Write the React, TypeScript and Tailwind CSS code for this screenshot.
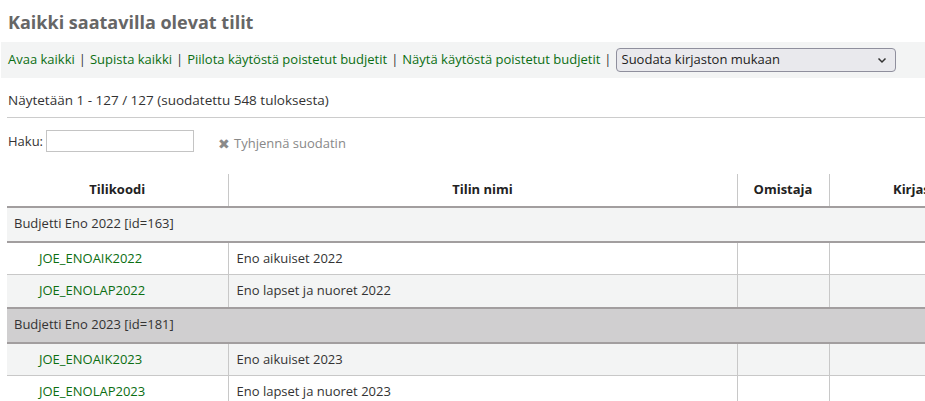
const GREEN = 'text-[#0b6e12]';

type Row = { code: string; name: string };
type Group = { title: string; rows: Row[]; dark?: boolean };

const groups: Group[] = [
  {
    title: 'Budjetti Eno 2022 [id=163]',
    rows: [
      { code: 'JOE_ENOAIK2022', name: 'Eno aikuiset 2022' },
      { code: 'JOE_ENOLAP2022', name: 'Eno lapset ja nuoret 2022' },
    ],
  },
  {
    title: 'Budjetti Eno 2023 [id=181]',
    dark: true,
    rows: [
      { code: 'JOE_ENOAIK2023', name: 'Eno aikuiset 2023' },
      { code: 'JOE_ENOLAP2023', name: 'Eno lapset ja nuoret 2023' },
    ],
  },
];

export default function App() {
  let stripe = 0;
  return (
    <div className="h-[401px] w-[925px] overflow-hidden bg-white text-[13px] text-[#333] [font-family:'Open_Sans',sans-serif]">
      <h1 className="px-2 pt-[9px] text-[18px] font-bold leading-[26px] text-[#666]">Kaikki saatavilla olevat tilit</h1>

      {/* Toolbar */}
      <div className="mt-[7px] ml-px flex h-9 items-center bg-[#f3f4f4] px-[7px] whitespace-nowrap">
        <a className={GREEN}>Avaa kaikki</a>
        <span className="mx-[4px]">|</span>
        <a className={GREEN}>Supista kaikki</a>
        <span className="mx-[4px]">|</span>
        <a className={GREEN}>Piilota käytöstä poistetut budjetit</a>
        <span className="mx-[4px]">|</span>
        <a className={GREEN}>Näytä käytöstä poistetut budjetit</a>
        <span className="mx-[4px]">|</span>
        <div className="flex h-6 w-[280px] items-center justify-between rounded-[4px] border border-[#8f8f9d] bg-[#e9e9ed] px-[5px] text-[#222]">
          <span>Suodata kirjaston mukaan</span>
          <svg width="10" height="10" viewBox="0 0 10 10" className="mr-[3px]">
            <path d="M1.5 3.5 L5 7 L8.5 3.5" fill="none" stroke="#333" strokeWidth="1.5" />
          </svg>
        </div>
      </div>

      <div className="px-2">
        <p className="pt-[13px] text-[13.5px] leading-[18px]">Näytetään 1 - 127 / 127 (suodatettu 548 tuloksesta)</p>
        <div className="mt-[8px] -mr-2 ml-[-1px] border-t border-[#cccccc]" />

        {/* Search */}
        <div className="mt-[11px] flex items-center">
          <label className="mr-[3px]">Haku:</label>
          <input className="h-[22px] w-[148px] border border-[#c4c4c4] bg-white" />
          <span className="mt-[5px] ml-[24px] flex items-center text-[#888]">
            <span className="mr-[4px] text-[14px] leading-none text-[#8a8a8a]">✖</span>
            Tyhjennä suodatin
          </span>
        </div>
      </div>

      {/* Table */}
      <table className="mt-[20px] ml-[7px] w-[1000px] table-fixed border-collapse">
        <colgroup>
          <col className="w-[221px]" />
          <col className="w-[509px]" />
          <col className="w-[92px]" />
          <col className="w-[178px]" />
        </colgroup>
        <thead>
          <tr className="h-[33px]">
            <th className="border-r border-b-2 border-r-[#c8c8c8] border-b-[#a29e9f] font-bold text-[#222]">Tilikoodi</th>
            <th className="border-r border-b-2 border-r-[#c8c8c8] border-b-[#a29e9f] font-bold text-[#222]">Tilin nimi</th>
            <th className="border-r border-b-2 border-r-[#c8c8c8] border-b-[#a29e9f] font-bold text-[#222]">Omistaja</th>
            <th className="border-b-2 border-b-[#a29e9f] font-bold text-[#222]">Kirjasto</th>
          </tr>
        </thead>
        <tbody>
          {groups.map((g) => {
            stripe = 0;
            return [
              <tr key={g.title} className={g.dark ? 'bg-[#d0cfd0]' : 'bg-[#f3f4f4]'}>
                <td colSpan={4} className="h-[35px] border-y-2 border-[#a29e9f] pl-[7px] text-left">
                  {g.title}
                </td>
              </tr>,
              ...g.rows.map((r) => {
                const odd = stripe++ % 2 === 1;
                const bg = g.dark ? (odd ? 'bg-white' : 'bg-[#f3f4f4]') : odd ? 'bg-[#f3f4f4]' : 'bg-white';
                return (
                  <tr key={r.code} className={`${bg} h-[33px]`}>
                    <td className="border-r border-b border-[#c8c8c8] pl-8">
                      <a className={GREEN}>{r.code}</a>
                    </td>
                    <td className="border-r border-b border-[#c8c8c8] pl-2">{r.name}</td>
                    <td className="border-r border-b border-[#c8c8c8]" />
                    <td className="border-b border-[#c8c8c8]" />
                  </tr>
                );
              }),
            ];
          })}
        </tbody>
      </table>
    </div>
  );
}
